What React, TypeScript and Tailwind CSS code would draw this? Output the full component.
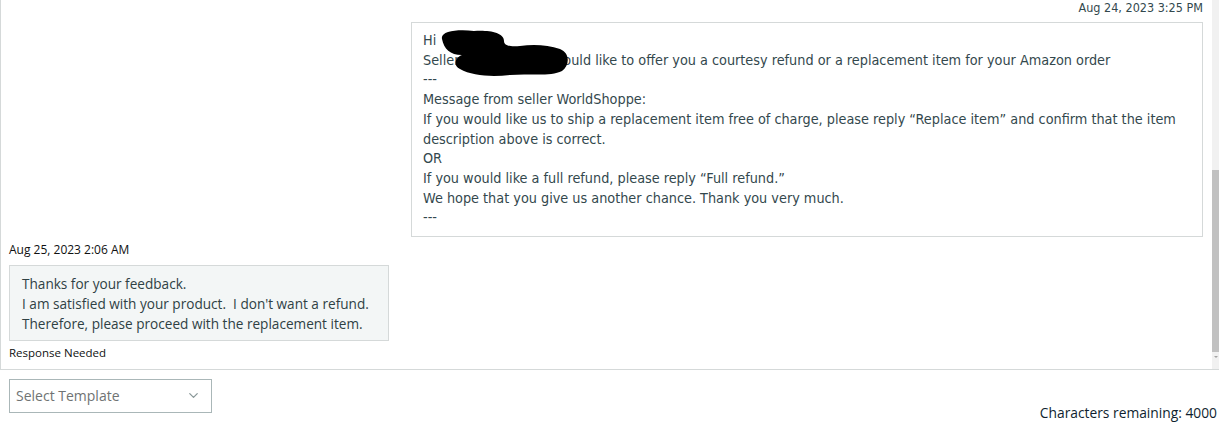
import { FiChevronDown } from "react-icons/fi";

const sellerLines = [
  "Hi",
  "Seller WorldShoppe would like to offer you a courtesy refund or a replacement item for your Amazon order",
  "---",
  "Message from seller WorldShoppe:",
  "If you would like us to ship a replacement item free of charge, please reply \u201cReplace item\u201d and confirm that the item description above is correct.",
  "OR",
  "If you would like a full refund, please reply \u201cFull refund.\u201d",
  "We hope that you give us another chance. Thank you very much.",
  "---",
];

function Redaction() {
  return (
    <svg
      className="absolute left-[26px] top-[6px]"
      width="132"
      height="48"
      viewBox="0 0 132 48"
    >
      <path
        d="M4 10 C2 2 20 0 36 2 C50 1 66 3 66 12 C66 16 70 18 82 17 C96 15 110 16 122 20 C132 24 132 36 124 42 C112 48 90 44 72 46 C54 48 34 47 22 40 C14 36 18 28 24 26 C12 26 6 20 4 10 Z"
        fill="#000"
      />
    </svg>
  );
}

function SellerMessage() {
  return (
    <div className="flex flex-col items-end">
      <div className="text-[12.5px] leading-[16px] text-[#33484d] [font-family:'DejaVu_Sans_Condensed','DejaVu_Sans',sans-serif] [font-stretch:condensed]">
        Aug 24, 2023 3:25 PM
      </div>
      <div className="relative mt-[6px] w-[792px] border border-[#d5d9d9] bg-white pl-[11px] pr-[20px] pt-[8px] pb-[8px] text-[14.3px] leading-[19.7px] text-[#33484d] [font-family:'DejaVu_Sans_Condensed','DejaVu_Sans',sans-serif] [font-stretch:condensed]">
        {sellerLines.map((line, i) => (
          <div key={i}>{line}</div>
        ))}
        <Redaction />
      </div>
    </div>
  );
}

function BuyerMessage() {
  return (
    <div className="mt-[5px] flex flex-col items-start [font-family:'Open_Sans',sans-serif]">
      <div className="text-[12px] leading-[16px] text-[#0f1111]">Aug 25, 2023 2:06 AM</div>
      <div className="mt-[7px] w-[380px] whitespace-nowrap border border-[#d5d9d9] bg-[#f3f6f6] px-[12px] pt-[8px] pb-[6px] text-[13.6px] leading-[20px] text-[#2f4144]">
        <div>Thanks for your feedback.</div>
        <div>I am satisfied with your product.&nbsp; I don't want a refund.</div>
        <div>Therefore, please proceed with the replacement item.</div>
      </div>
      <div className="mt-[4px] text-[11.5px] leading-[16px] text-[#0f1111]">Response Needed</div>
    </div>
  );
}

function Scrollbar() {
  return (
    <div className="flex w-[7px] flex-col bg-[#f1f1f1]">
      <div className="h-[170px]" />
      <div className="h-[182px] bg-[#c1c1c1]" />
      <div className="flex flex-1 items-start justify-center pt-[4px]">
        <div className="h-0 w-0 border-x-[2px] border-t-[2px] border-x-transparent border-t-[#a3a3a3]" />
      </div>
    </div>
  );
}

export default function App() {
  return (
    <div className="flex h-[426px] w-[1219px] flex-col overflow-hidden bg-white">
      <div className="flex h-[370px] border-b border-l border-[#d5d9d9]">
        <div className="flex-1 pl-[8px] pr-[9px]">
          <SellerMessage />
          <BuyerMessage />
        </div>
        <Scrollbar />
      </div>
      <div className="flex flex-1 items-start justify-between pl-[9px] pr-[2px] pt-[9px] [font-family:'Open_Sans',sans-serif]">
        <div className="flex h-[34px] w-[203px] items-center justify-between border border-[#aab7b8] pl-[6px] pr-[10px] pb-[2px] text-[14px] text-[#6f7373]">
          <span>Select Template</span>
          <FiChevronDown className="text-[#8a9899]" size={15} />
        </div>
        <div className="mt-[24px] text-[13.8px] leading-[20px] text-[#0f1f2f]">
          Characters remaining: 4000
        </div>
      </div>
    </div>
  );
}
